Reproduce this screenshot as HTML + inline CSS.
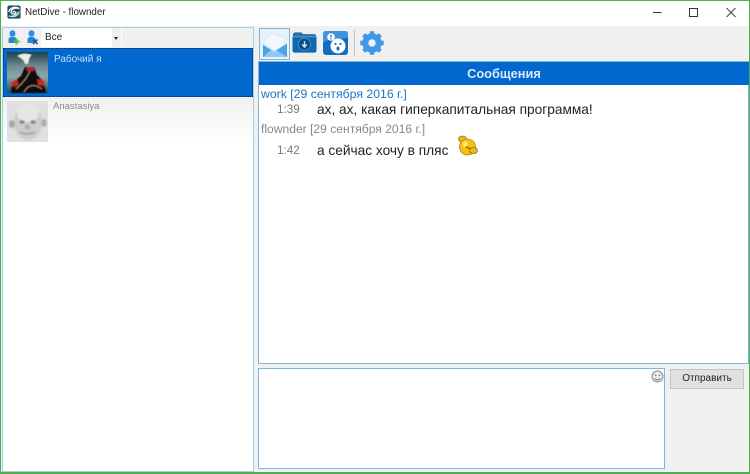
<!DOCTYPE html>
<html><head><meta charset="utf-8">
<style>
html,body{margin:0;padding:0;width:750px;height:474px;overflow:hidden;background:#f0f0f0}
*{box-sizing:border-box}
body{font-family:"Liberation Sans",sans-serif;position:relative}
.a{position:absolute;white-space:nowrap}
svg{position:absolute;overflow:visible}
</style></head><body>
<div class="a" style="left:0;top:0;width:750px;height:26px;background:#fff"></div>
<svg style="left:7px;top:5px" width="14" height="14" viewBox="0 0 16 16">
<rect x="0.5" y="0.5" width="15" height="15" rx="2" fill="#1d4f5c"/>
<path d="M2 8C3 3 10 1 14 4C10 3 5 4 4.500 8C5 11 9 11 10 9C9 7 7 7 6.500 8.500" fill="none" stroke="#fff" stroke-width="1.400"/>
<path d="M14 7C14 12 8 15 2 12.500C6 13.500 11 12 12 8" fill="none" stroke="#cfe3e8" stroke-width="1.200"/>
</svg>
<div class="a" style="left:25px;top:6px;font-size:9.800px;line-height:14px;color:#222">NetDive - flownder</div>
<svg style="left:650px;top:0" width="100" height="26">
<path d="M3 12.500H11.500" stroke="#333" stroke-width="1"/>
<rect x="39.500" y="8.500" width="8" height="8" fill="none" stroke="#333" stroke-width="1"/>
<path d="M76.500 8L85.500 17M85.500 8L76.500 17" stroke="#444" stroke-width="1"/>
</svg>

<!-- left panel -->
<div class="a" style="left:2px;top:27px;width:252px;height:445px;background:#fff;border:1px solid #a3cfe8"></div>
<div class="a" style="left:3px;top:28px;width:250px;height:20px;background:#f0f0f0"></div>
<svg style="left:7px;top:30px" width="13" height="15" viewBox="0 0 13 15">
<ellipse cx="5.500" cy="3.500" rx="3" ry="3.300" fill="#2a90e0"/><path d="M1.500 13V9.500C1.500 7.500 3 7 5.500 7C8 7 9.500 7.500 9.500 9.500V13Z" fill="#2a84d4"/>
<path d="M6.500 11.500H12.500M9.500 8.500V14.500" stroke="#43c24a" stroke-width="2"/>
</svg>
<svg style="left:26px;top:30px" width="13" height="15" viewBox="0 0 13 15">
<ellipse cx="5.500" cy="3.500" rx="3" ry="3.300" fill="#2a90e0"/><path d="M1.500 13V9.500C1.500 7.500 3 7 5.500 7C8 7 9.500 7.500 9.500 9.500V13Z" fill="#2a84d4"/>
<path d="M7 9.500L11.500 14M11.500 9.500L7 14" stroke="#1a5c9c" stroke-width="1.600"/>
</svg>
<div class="a" style="left:41px;top:28px;width:81px;height:19px;background:#fff"></div>
<div class="a" style="left:45px;top:31px;font-size:10px;line-height:14px;color:#222">Все</div>
<div class="a" style="left:112px;top:28px;width:9px;height:19px;background:#efefef"></div>
<div class="a" style="left:114px;top:37px;width:0;height:0;border-left:2.500px solid transparent;border-right:2.500px solid transparent;border-top:3px solid #222"></div>

<div class="a" style="left:3px;top:48px;width:250px;height:49px;background:#0068cf;border:1px dotted #06305e"></div>
<svg style="left:7px;top:52px" width="41" height="41" viewBox="0 0 41 41">
<defs>
<linearGradient id="g1" x1="0" y1="0" x2="0" y2="1"><stop offset="0" stop-color="#1e3e4a"/><stop offset="0.35" stop-color="#6f8d94"/><stop offset="0.6" stop-color="#8ea6aa"/><stop offset="1" stop-color="#2a4a58"/></linearGradient>
<filter id="b1"><feGaussianBlur stdDeviation="0.6"/></filter>
<filter id="b2"><feGaussianBlur stdDeviation="0.800"/></filter>
</defs>
<rect width="41" height="41" fill="url(#g1)"/>
<g filter="url(#b1)">
<path d="M10 4C14 1 20 1 25 3C22 5 22 8 21 12L18 12C17 8 14 6 10 4Z" fill="#f0ece4"/>
<path d="M4 41C4 34 8 28 14 24L18 15H27L30 23C34 26 38 33 39 41Z" fill="#0c0c10"/>
<path d="M19 15H28L27 19H20Z" fill="#b0261c"/>
<path d="M4 31L10 27L12 33L7 35ZM30 27L37 29L37 34L31 33Z" fill="#c8281c"/>
<path d="M9 37C16 31 20 26 23 19M17 40C21 33 27 31 35 37" stroke="#b08570" stroke-width="1" fill="none"/>
</g>
</svg>
<div class="a" style="left:54px;top:53px;font-size:10px;line-height:13px;color:#c8def4">Рабочий я</div>

<div class="a" style="left:3px;top:97px;width:250px;height:49px;background:linear-gradient(#f0f0f0,#f6f6f6 35%,#ffffff)"></div>
<svg style="left:7px;top:101px" width="41" height="41" viewBox="0 0 41 41">
<rect width="41" height="41" fill="#e0e0e0"/>
<g filter="url(#b2)">
<ellipse cx="21" cy="21" rx="14" ry="18" fill="#cdcdcd"/>
<ellipse cx="21" cy="12" rx="11" ry="9" fill="#e6e6e6"/>
<ellipse cx="5" cy="23" rx="3" ry="4" fill="#a8a8a8"/><ellipse cx="37" cy="22" rx="2.600" ry="4" fill="#acacac"/>
<ellipse cx="15" cy="21" rx="2.600" ry="1.800" fill="#7a7a7a"/><ellipse cx="26" cy="21" rx="2.600" ry="1.800" fill="#7a7a7a"/>
<ellipse cx="20.500" cy="26" rx="3" ry="2.500" fill="#adadad"/>
<path d="M13 31C17 33.500 24 33.500 28 31" stroke="#8a8a8a" stroke-width="1.300" fill="none"/>
</g>
</svg>
<div class="a" style="left:53px;top:100px;font-size:9.500px;line-height:13px;color:#888">Anastasiya</div>

<!-- toolbar -->
<div class="a" style="left:259px;top:28px;width:31px;height:32px;background:#e6f1f9;border:1px solid #7fb6d8"></div>
<svg style="left:260px;top:30px" width="30" height="30" viewBox="0 0 30 30">
<path d="M4 12L11 3L25 8L24 22H4Z" fill="#f4f8fc" stroke="#cfe2f2" stroke-width="0.600"/>
<path d="M3 14L14 21L27 13V27H3Z" fill="#4aa3e6"/>
<path d="M3 27L12 19L14 20.500L17 20.500L27 27Z" fill="#8cc8f2"/>
<path d="M3 14L14 21L27 13" fill="none" stroke="#d8ecfa" stroke-width="1.200"/>
</svg>
<svg style="left:292px;top:31px" width="25" height="23" viewBox="0 0 27 24">
<path d="M1 4C1 2 2 1 4 1H10L12 3H24C25.500 3 26 4 26 5V6H1Z" fill="#2a6f9e"/>
<rect x="0.500" y="5" width="26" height="18" rx="2.500" fill="#0d68b5"/>
<rect x="0.500" y="5" width="26" height="1.500" fill="#3f95d4"/>
<circle cx="13.500" cy="14" r="6.500" fill="#0a4a80" stroke="#4d8fbe" stroke-width="1"/>
<path d="M13.500 10.500V16M11 14L13.500 17L16 14" stroke="#c8e2f5" stroke-width="1.600" fill="none"/>
</svg>
<svg style="left:323px;top:31px" width="25" height="24" viewBox="0 0 25 24">
<rect width="25" height="24" rx="3" fill="#0f6cc0"/>
<path d="M0 3C0 1 1 0 3 0H22C24 0 25 1 25 3V6C16 10 8 6 0 12Z" fill="#3d96dc"/>
<circle cx="8" cy="6" r="3.800" fill="#fff"/>
<rect x="7.400" y="3.800" width="1.200" height="2.800" fill="#0f6cc0"/><rect x="7.400" y="7.300" width="1.200" height="1.200" fill="#0f6cc0"/>
<circle cx="15" cy="15" r="7.500" fill="#fff"/>
<circle cx="12.500" cy="13" r="1.100" fill="#0f6cc0"/><circle cx="17.500" cy="13" r="1.100" fill="#0f6cc0"/>
<ellipse cx="15" cy="17.500" rx="1.500" ry="2" fill="#0f6cc0"/>
</svg>
<div class="a" style="left:354px;top:30px;width:1px;height:26px;background:#c4c4c4"></div>
<svg style="left:360px;top:31px" width="24" height="24" viewBox="0 0 24 24">
<circle cx="12" cy="12" r="6.700" fill="none" stroke="#4298e6" stroke-width="6"/>
<g stroke="#4298e6" stroke-width="4.400"><path d="M12 0.300V4M12 20V23.700M0.300 12H4M20 12H23.700M3.700 3.700L6.300 6.300M17.700 17.700L20.300 20.300M3.700 20.300L6.300 17.700M17.700 6.300L20.300 3.700"/></g>
</svg>

<!-- messages -->
<div class="a" style="left:258px;top:61px;width:491px;height:303px;background:#fff;border:1px solid #7fb6d8"></div>
<div class="a" style="left:259px;top:62px;width:490px;height:23px;background:#0068cf;color:#dcebf9;font-size:12.800px;font-weight:bold;line-height:23px;text-align:center">Сообщения</div>
<div class="a" style="left:261px;top:87px;font-size:12.250px;line-height:15px;color:#1f73c4">work [29 сентября 2016 г.]</div>
<div class="a" style="left:277px;top:102px;font-size:11.700px;line-height:16px;color:#777">1:39</div>
<div class="a" style="left:317px;top:101px;font-size:13.700px;line-height:17px;color:#222">ах, ах, какая гиперкапитальная программа!</div>
<div class="a" style="left:261px;top:122px;font-size:12.100px;line-height:15px;color:#888">flownder [29 сентября 2016 г.]</div>
<div class="a" style="left:277px;top:143px;font-size:11.700px;line-height:16px;color:#777">1:42</div>
<div class="a" style="left:317px;top:142px;font-size:13.700px;line-height:17px;color:#222">а сейчас хочу в пляс</div>
<svg style="left:457px;top:135px" width="22" height="22" viewBox="0 0 22 22">
<ellipse cx="5.500" cy="4" rx="4" ry="3" fill="#e8b818" stroke="#a27a10" stroke-width="0.800"/>
<circle cx="10.500" cy="12" r="8" fill="#f5c20e" stroke="#b08a12" stroke-width="0.800"/>
<circle cx="8" cy="9" r="2.800" fill="#fbe878"/>
<path d="M9 12L14 14" stroke="#6a5410" stroke-width="1.200"/>
<ellipse cx="16.500" cy="15.500" rx="4" ry="3" fill="#e8c020" stroke="#8a6f10" stroke-width="0.800"/>
</svg>

<!-- input -->
<div class="a" style="left:258px;top:368px;width:407px;height:101px;background:#fff;border:1px solid #7fb6d8"></div>
<svg style="left:651px;top:370px" width="13" height="13" viewBox="0 0 13 13">
<circle cx="6.500" cy="6.500" r="5.500" fill="#eee" stroke="#888" stroke-width="1"/>
<path d="M3.500 4.500L5.500 6M9.500 4.500L7.500 6M3.500 8C5 10.500 8 10.500 9.500 8" fill="none" stroke="#777" stroke-width="1"/>
</svg>
<div class="a" style="left:670px;top:369px;width:74px;height:20px;background:#e1e1e1;border:1px solid #c4c4c4;font-size:10px;line-height:18px;text-align:center;color:#222">Отправить</div>

<!-- window border -->
<div class="a" style="left:0;top:0;width:750px;height:474px;border:1px solid #4caf50;border-bottom-width:2px"></div>
</body></html>
